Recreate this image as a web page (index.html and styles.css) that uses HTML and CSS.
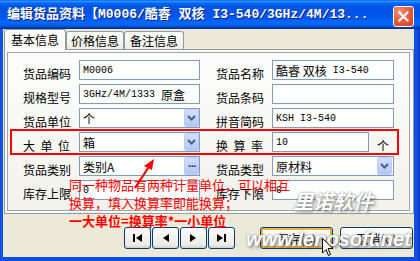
FILE: index.html
```html
<!DOCTYPE html>
<html>
<head>
<meta charset="utf-8">
<link rel="stylesheet" href="styles.css">
</head>
<body>
<div class="window">
  <div class="titlebar">
    <div class="title">编辑货品资料【M0006/酷睿 双核 I3-540/3GHz/4M/13...</div>
    <div class="close">
      <svg width="11" height="11" viewBox="0 0 11 11"><path d="M1.5 1.5L9.5 9.5M9.5 1.5L1.5 9.5" stroke="#fff" stroke-width="2.2" stroke-linecap="square"/></svg>
    </div>
  </div>
  <div class="client">
    <div class="tabs">
      <div class="tab active t1">基本信息</div>
      <div class="tab t2">价格信息</div>
      <div class="tab t3">备注信息</div>
    </div>
    <div class="panel">
      <div class="inner">
        <div class="row">
          <div class="lbl">货品编码</div>
          <div class="edit">M0006</div>
          <div class="lbl r">货品名称</div>
          <div class="edit w2"><span class="c">酷睿 双核</span>&nbsp;I3-540</div>
        </div>
        <div class="row">
          <div class="lbl">规格型号</div>
          <div class="edit">3GHz/4M/1333 <span class="c">原盒</span></div>
          <div class="lbl r">货品条码</div>
          <div class="edit w2"></div>
        </div>
        <div class="row">
          <div class="lbl">货品单位</div>
          <div class="edit"><span class="c">个</span><span class="dd"><svg width="9" height="6" viewBox="0 0 9 6"><path d="M1 1L4.5 4.5L8 1" fill="none" stroke="#4d6185" stroke-width="2"/></svg></span></div>
          <div class="lbl r">拼音简码</div>
          <div class="edit w2">KSH I3-540</div>
        </div>
        <div class="row">
          <div class="lbl"><span class="sp">大 单 位</span></div>
          <div class="edit"><span class="c">箱</span><span class="dd"><svg width="9" height="6" viewBox="0 0 9 6"><path d="M1 1L4.5 4.5L8 1" fill="none" stroke="#4d6185" stroke-width="2"/></svg></span></div>
          <div class="lbl r"><span class="sp">换 算 率</span></div>
          <div class="edit short">10</div>
          <div class="unit">个</div>
        </div>
        <div class="row">
          <div class="lbl">货品类别</div>
          <div class="edit"><span class="c">类别A</span><span class="dd dots">···</span></div>
          <div class="lbl r">货品类型</div>
          <div class="edit w2"><span class="c">原材料</span><span class="dd"><svg width="9" height="6" viewBox="0 0 9 6"><path d="M1 1L4.5 4.5L8 1" fill="none" stroke="#4d6185" stroke-width="2"/></svg></span></div>
        </div>
        <div class="row">
          <div class="lbl">库存上限</div>
          <div class="edit">0</div>
          <div class="lbl r">库存下限</div>
          <div class="edit w2">0</div>
        </div>
      </div>
    </div>
    <div class="btns">
      <div class="btn nb"><svg width="9" height="8" viewBox="0 0 9 8"><rect x="0" y="0" width="2" height="8" fill="#000"/><path d="M9 0L3 4L9 8Z" fill="#000"/></svg></div>
      <div class="btn nb"><svg width="7" height="8" viewBox="0 0 7 8"><path d="M7 0L1 4L7 8Z" fill="#000"/></svg></div>
      <div class="btn nb"><svg width="7" height="8" viewBox="0 0 7 8"><path d="M0 0L6 4L0 8Z" fill="#000"/></svg></div>
      <div class="btn nb"><svg width="9" height="8" viewBox="0 0 9 8"><path d="M0 0L6 4L0 8Z" fill="#000"/><rect x="7" y="0" width="2" height="8" fill="#000"/></svg></div>
      <div class="btn wide save">保存(S)</div>
      <div class="btn wide cancel">取消(C)</div>
    </div>
  </div>

  <div class="hl"></div>
  <svg class="arrow" width="30" height="34" viewBox="0 0 30 34">
    <path d="M4 31L19 8" stroke="#f00" stroke-width="2.2" fill="none"/>
    <path d="M23 2L13 9L21 13Z" fill="#f00"/>
  </svg>
  <div class="note">
    <div>同一种物品有两种计量单位，可以相互</div>
    <div>换算，填入换算率即能换算；</div>
    <div class="b">一大单位=换算率*一小单位</div>
  </div>
  <div class="wm wm1">里诺软件</div>
  <div class="wm wm2">www.lenosoft.net</div>
  <svg class="cursor" width="12" height="19" viewBox="0 0 12 19"><path d="M0.5 0.5L0.5 15L4 11.5L6.5 17.5L8.5 16.5L6 10.5L11 10.5Z" fill="#fff" stroke="#000" stroke-width="1"/></svg>
</div>
</body>
</html>
```

FILE: styles.css
```css
* { box-sizing: border-box; }
html, body { margin: 0; padding: 0; }
body {
  width: 420px;
  height: 261px;
  overflow: hidden;
  font-family: "Noto Sans CJK SC", sans-serif;
  font-size: 12px;
  color: #000;
}
.window {
  position: relative;
  width: 420px;
  height: 261px;
  display: flex;
  flex-direction: column;
  background: linear-gradient(90deg, #0838c8 0, #1a5ee8 1px, #0a4ee0 3px, #0a4ee0 414px, #1553e0 416px, #0838c8 420px);
}
.titlebar {
  height: 29px;
  flex: none;
  display: flex;
  align-items: flex-start;
  padding: 0 6px 0 7px;
  background: linear-gradient(to bottom, #0058ee 0%, #3593ff 4%, #288eff 6%, #127dff 8%, #036ffc 10%, #0262ee 14%, #0057e5 20%, #0054e3 24%, #0055eb 56%, #005bf5 66%, #026afe 76%, #0062ef 86%, #0052d6 92%, #0040ab 94%, #003092 100%);
}
.title {
  flex: 1;
  color: #fff;
  font-family: "Liberation Mono", "Noto Sans CJK SC", monospace;
  font-weight: bold;
  font-size: 13px;
  line-height: 30px;
  white-space: nowrap;
  overflow: hidden;
  text-shadow: 1px 1px 0 #0a1e80;
}
.close {
  margin-top: 6px;
  width: 21px;
  height: 21px;
  border: 1px solid #fff;
  border-radius: 3px;
  background: radial-gradient(circle at 30% 25%, #f29478 0, #e5603c 45%, #d1401e 100%);
  display: flex;
  align-items: center;
  justify-content: center;
}
.client {
  flex: 1;
  margin: 0 6px 4px 3px;
  background: #ece9d8;
  display: flex;
  flex-direction: column;
}
.tabs {
  height: 20px;
  display: flex;
  align-items: flex-end;
  padding-left: 1px;
  position: relative;
  z-index: 1;
}
.tab {
  height: 18px;
  border: 1px solid #919b9c;
  border-bottom: none;
  border-radius: 3px 3px 0 0;
  background: linear-gradient(#ffffff, #ecebe5);
  font-size: 12px;
  line-height: 17px;
  text-align: center;
}
.tab.active {
  height: 21px;
  margin-bottom: -1px;
  background: #fcfcfe;
  line-height: 19px;
}
.t1 { width: 62px; }
.t2 { width: 58px; }
.t3 { width: 60px; }
.panel {
  margin-left: 1px;
  width: 410px;
  height: 165px;
  flex: none;
  border: 1px solid #919b9c;
  background: #fcfcfe;
  padding: 2px 3px 2px 2px;
}
.inner {
  height: 100%;
  border: 1px solid #a5a5a5;
  background: linear-gradient(#fdfdfd, #f3f2ec);
  padding: 7px 0 0 15px;
  display: flex;
  flex-direction: column;
  gap: 4px;
}
.row {
  display: flex;
  height: 20px;
}
.lbl {
  width: 56px;
  flex: none;
  padding-top: 7px;
  line-height: 13px;
  white-space: nowrap;
}
.lbl.r { margin-left: 16px; }
.sp {
  display: inline-block;
  width: 47px;
  text-align: justify;
  text-align-last: justify;
}
.edit {
  width: 121px;
  height: 20px;
  flex: none;
  border: 1px solid #7f9db9;
  background: #fff;
  padding-left: 3px;
  display: flex;
  align-items: center;
  font-family: "Liberation Mono", "Noto Sans CJK SC", monospace;
  font-size: 10px;
  white-space: pre;
}
.edit .c {
  font-family: "Noto Sans CJK SC", sans-serif;
  font-size: 12px;
}
.edit.w2 { width: 122px; }
.edit.short { width: 97px; }
.dd {
  margin-left: auto;
  width: 15px;
  height: 18px;
  border: 1px solid #bccdf6;
  border-radius: 2px;
  background: linear-gradient(#d2defc, #b2c6f6);
  display: flex;
  align-items: center;
  justify-content: center;
}
.w2 .dd { margin-right: 1px; }
.dots {
  font-family: "Liberation Sans", sans-serif;
  font-weight: bold;
  font-size: 11px;
  color: #1a2a55;
  letter-spacing: -1px;
  padding-left: 1px;
}
.unit {
  margin-left: 8px;
  padding-top: 7px;
  line-height: 13px;
}
.btns {
  display: flex;
  margin-top: 13px;
  padding-left: 121px;
}
.btn {
  height: 22px;
  border: 1px solid #003c74;
  border-radius: 3px;
  background: linear-gradient(#ffffff 0%, #f4f3ee 40%, #ecebe6 85%, #d6d0c5 100%);
  display: flex;
  align-items: center;
  justify-content: center;
  font-size: 12px;
}
.nb { width: 27px; margin-right: 1px; }
.wide { width: 73px; }
.save {
  margin-left: 24px;
  box-shadow: inset 0 0 0 2px #f5b13d;
}
.cancel { margin-left: 7px; }
.hl {
  position: absolute;
  left: 10px;
  top: 129px;
  width: 389px;
  height: 26px;
  border: 2px solid #ff0000;
}
.arrow {
  position: absolute;
  left: 131px;
  top: 157px;
}
.note {
  position: absolute;
  left: 69px;
  top: 176px;
  color: #ff0000;
  font-size: 13px;
  line-height: 18px;
  white-space: nowrap;
}
.note .b { font-weight: bold; }
.wm {
  position: absolute;
  color: #fff;
  font-family: "Liberation Sans", "Noto Sans CJK SC", sans-serif;
  font-weight: bold;
  font-style: italic;
  font-size: 20px;
  line-height: 20px;
  white-space: nowrap;
  text-shadow: 0 0 2px rgba(90,90,90,0.8), 2px 2px 3px rgba(60,60,60,0.45);
}
.wm1 { left: 293px; top: 192px; }
.wm2 { left: 246px; top: 229px; }
.cursor {
  position: absolute;
  left: 322px;
  top: 238px;
}
```
